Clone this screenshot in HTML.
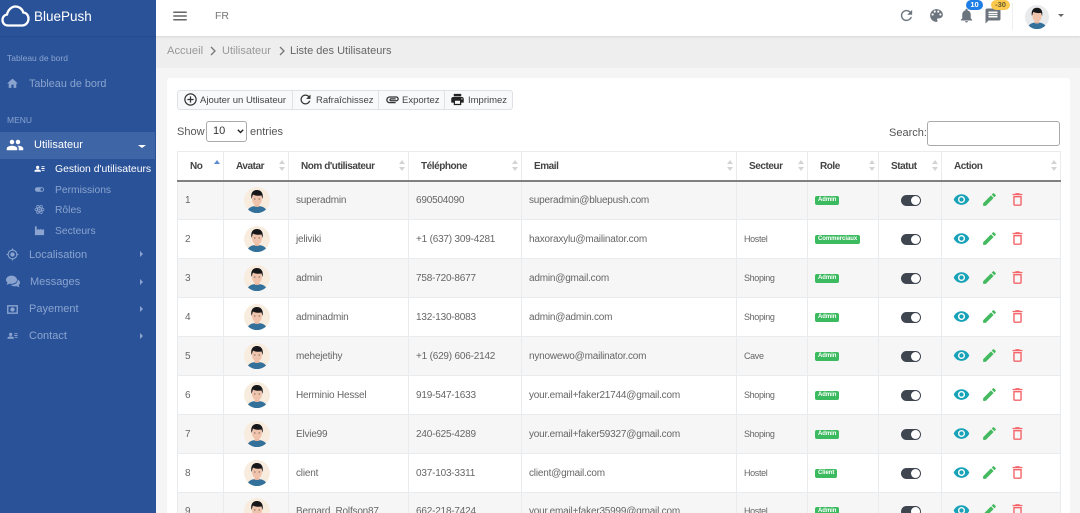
<!DOCTYPE html>
<html><head><meta charset="utf-8"><title>BluePush</title>
<style>
*{box-sizing:border-box}
html,body{margin:0;padding:0;width:1080px;height:513px;overflow:hidden;background:#f5f5f5;font-family:"Liberation Sans",sans-serif;color:#555}
#root{position:absolute;left:0;top:0;width:1080px;height:513px;overflow:hidden}
.a{position:absolute;white-space:nowrap}
svg{display:block;fill:currentColor}
#side{position:absolute;left:0;top:0;width:156px;height:513px;background:#2a5298;color:#8aa4cf;overflow:hidden}
#top{position:absolute;left:156px;top:0;width:924px;height:36px;background:#fff;box-shadow:0 1px 2px rgba(0,0,0,.1)}
#crumb{position:absolute;left:156px;top:36px;width:924px;height:32px;background:#eee}
#card{position:absolute;left:167px;top:78px;width:903px;height:440px;background:#fff;border-radius:3px}
table{position:absolute;left:177px;top:151px;width:883px;border-collapse:collapse;table-layout:fixed;font-size:10px;letter-spacing:-.2px}
th{height:29px;border:1px solid #e9ecef;border-bottom:2px solid #808080;color:#444;text-align:left;padding:2px 0 0 12px;font-size:10px;letter-spacing:-.45px;position:relative}
td{height:39px;border:1px solid #e9ecef;padding:0 0 0 7px;color:#666;white-space:nowrap;overflow:hidden}
td.s{font-size:9px;letter-spacing:-.35px}
tr:nth-child(odd) td{background:#f6f6f6}
tr.l td{padding-bottom:2px}
th i{position:absolute;right:3px;top:8px;width:6px;height:11px}
th i:before,th i:after{content:"";position:absolute;left:0;border-left:3px solid transparent;border-right:3px solid transparent}
th i:before{top:0;border-bottom:4px solid #d4d4d4}
th i:after{bottom:0;border-top:4px solid #d4d4d4}
.bd{display:inline-block;background:#3cba5f;color:#fff;font-size:6px;font-weight:bold;line-height:9px;padding:0 3px;border-radius:2px;position:relative;top:-1px;letter-spacing:-.05px}
.tg{display:block;width:20px;height:11px;border-radius:6px;background:#3f4650;position:relative;margin-left:15px}
.tg:after{content:"";position:absolute;right:1px;top:1px;width:9px;height:9px;border-radius:50%;background:#fff}
.ac{margin-left:4px;position:relative;top:-1px}
.av{margin-left:13px;position:relative;top:-.5px}
.btn{position:absolute;top:90px;height:20px;background:#f8f9fa;border:1px solid #dee2e6;color:#444;font-size:9.500px;line-height:20px;white-space:nowrap}
</style></head><body><div id="root">
<svg width="0" height="0" style="position:absolute">
<symbol id="ava" viewBox="0 0 26 26"><circle cx="13" cy="13" r="13" fill="#f8ecdf"/><path d="M4 22.500c2-3 5.500-3.500 9-3.500s7 .5 9 3.500a13 13 0 0 1-18 0z" fill="#33709a"/><rect x="10.800" y="15" width="4.400" height="5" fill="#e5b49c"/><ellipse cx="13" cy="12" rx="5" ry="6.500" fill="#f0c4ac"/><path d="M7.500 12c-1.200-6 1.500-9 5.500-9s6.700 3 5.500 9l-1-3.500c-2.500.5-6.500.3-8.500-1z" fill="#17171a"/><circle cx="10.800" cy="12" r=".6" fill="#555"/><circle cx="15.200" cy="12" r=".6" fill="#555"/></symbol>
<symbol id="acts" viewBox="0 0 73 17">
<svg x="0" y="0" width="17" height="17" viewBox="0 0 24 24" style="color:#17a2b8"><path d="M12 4.500C7 4.500 2.730 7.610 1 12c1.730 4.390 6 7.500 11 7.500s9.270-3.110 11-7.500c-1.730-4.390-6-7.500-11-7.500zM12 17c-2.760 0-5-2.240-5-5s2.240-5 5-5 5 2.240 5 5-2.240 5-5 5zm0-8c-1.660 0-3 1.340-3 3s1.340 3 3 3 3-1.340 3-3-1.340-3-3-3z"/></svg>
<svg x="28" y="0" width="17" height="17" viewBox="0 0 24 24" style="color:#45b95f"><path d="M3 17.250V21h3.750L17.810 9.940l-3.750-3.750L3 17.250zM20.710 7.040c.39-.39.39-1.020 0-1.410l-2.340-2.340c-.39-.39-1.020-.39-1.410 0l-1.830 1.830 3.750 3.750 1.830-1.830z"/></svg>
<svg x="56" y="0" width="17" height="17" viewBox="0 0 24 24" style="color:#f4666b"><path d="M6 19c0 1.100.9 2 2 2h8c1.100 0 2-.9 2-2V7H6v12zM8 9h8v10H8V9zm7.500-5l-1-1h-5l-1 1H5v2h14V4z"/></svg>
</symbol>
<symbol id="ppl" viewBox="0 0 24 24"><path d="M16 11c1.660 0 2.990-1.340 2.990-3S17.660 5 16 5c-1.660 0-3 1.340-3 3s1.340 3 3 3zm-8 0c1.660 0 2.990-1.340 2.990-3S9.660 5 8 5C6.340 5 5 6.340 5 8s1.340 3 3 3zm0 2c-2.330 0-7 1.170-7 3.500V19h14v-2.500c0-2.330-4.670-3.500-7-3.500zm8 0c-.29 0-.62.02-.97.05 1.160.84 1.970 1.970 1.970 3.450V19h6v-2.500c0-2.330-4.670-3.500-7-3.500z"/></symbol>
<symbol id="ct" viewBox="0 0 24 24"><path d="M8 6a3.500 3.500 0 1 1 0 7 3.500 3.500 0 0 1 0-7zM1 19v-1.500C1 15 5.500 14 8 14s7 1 7 3.500V19zM16 7h7v2h-7zM16 11h7v2h-7zM17 15h6v2h-6z"/></symbol>
</svg>

<div id="crumb"></div>
<div id="top"></div>
<div id="card"></div>

<div id="side">
<div class="a" style="left:0;top:0;width:156px;height:36px;box-shadow:0 1px 1px rgba(0,0,0,.08)"></div>
<svg class="a" style="left:1px;top:5px;color:#fff" width="29" height="22" viewBox="0 0 29 22"><path d="M7 20.500C3.500 20.500 1.500 18 1.500 15c0-3 2-5 4.500-5.500C7 5 10.500 1.500 14.500 1.500c3.800 0 6.800 2.500 7.800 6 3 .2 5.200 2.800 5.200 6 0 3.800-2.700 7-6.500 7z" fill="none" stroke="#fff" stroke-width="2.300"/></svg>
<div class="a" style="left:34px;top:8px;font-size:13.500px;line-height:17px;color:#fff">BluePush</div>
<div class="a" style="left:7px;top:53px;font-size:8.500px;line-height:11px">Tableau de bord</div>
<svg class="a" style="left:6px;top:77px" width="13" height="13" viewBox="0 0 24 24"><path d="M10 20v-6h4v6h5v-8h3L12 3 2 12h3v8z"/></svg>
<div class="a" style="left:29px;top:78px;font-size:10.800px;line-height:13px">Tableau de bord</div>
<div class="a" style="left:7px;top:115px;font-size:8.500px;line-height:11px">MENU</div>
<div class="a" style="left:0;top:132px;width:155px;height:27px;background:#3e65a6"></div>
<svg class="a" style="left:6px;top:136px;color:#fff" width="18" height="18" viewBox="0 0 24 24"><use href="#ppl"/></svg>
<div class="a" style="left:34px;top:139px;font-size:11px;line-height:13px;color:#fff">Utilisateur</div>
<div class="a" style="left:138px;top:145px;border:4px solid transparent;border-top:3px solid #fff;border-bottom:0"></div>
<svg class="a" style="left:34px;top:163px;color:#fff" width="11" height="11" viewBox="0 0 24 24"><use href="#ct"/></svg>
<div class="a" style="left:55px;top:164px;font-size:10.400px;line-height:12px;color:#fff">Gestion d'utilisateurs</div>
<svg class="a" style="left:34px;top:184px" width="11" height="11" viewBox="0 0 24 24"><path d="M17 7H7a5 5 0 0 0 0 10h10a5 5 0 0 0 0-10zm0 8a3 3 0 1 1 0-6 3 3 0 0 1 0 6z"/></svg>
<div class="a" style="left:55px;top:185px;font-size:10.300px;line-height:12px">Permissions</div>
<svg class="a" style="left:34px;top:204px" width="11" height="11" viewBox="0 0 24 24"><g fill="none" stroke="currentColor" stroke-width="1.800"><ellipse cx="12" cy="12" rx="10" ry="4"/><ellipse cx="12" cy="12" rx="10" ry="4" transform="rotate(60 12 12)"/><ellipse cx="12" cy="12" rx="10" ry="4" transform="rotate(120 12 12)"/></g><circle cx="12" cy="12" r="2"/></svg>
<div class="a" style="left:55px;top:205px;font-size:10.300px;line-height:12px">Rôles</div>
<svg class="a" style="left:34px;top:225px" width="11" height="11" viewBox="0 0 24 24"><path d="M2 3h4v8l5-3v3l5-3v3l6-2v13H2z"/></svg>
<div class="a" style="left:55px;top:226px;font-size:10.300px;line-height:12px">Secteurs</div>
<svg class="a" style="left:6px;top:248px" width="13" height="13" viewBox="0 0 24 24"><path d="M12 8c-2.210 0-4 1.790-4 4s1.790 4 4 4 4-1.790 4-4-1.790-4-4-4zm8.940 3c-.46-4.170-3.770-7.480-7.940-7.940V1h-2v2.060C6.830 3.520 3.520 6.830 3.060 11H1v2h2.060c.46 4.170 3.770 7.480 7.940 7.940V23h2v-2.060c4.170-.46 7.480-3.770 7.940-7.940H23v-2h-2.060zM12 19c-3.870 0-7-3.130-7-7s3.130-7 7-7 7 3.130 7 7-3.130 7-7 7z"/></svg>
<div class="a" style="left:29px;top:249px;font-size:11px;line-height:13px">Localisation</div>
<svg class="a" style="left:6px;top:275px" width="14" height="13" viewBox="0 0 24 22"><ellipse cx="9.500" cy="8" rx="9.500" ry="7"/><path d="M3 12l-2 5 6-2.500z"/><path d="M20 7.500c2.500 1.300 4 3.300 4 5.500 0 1.700-.9 3.200-2.300 4.400L23 21l-5-2c-1 .2-2 .3-3 .3-3 0-5.700-1-7.200-2.700 6.500.6 12.700-2.800 12.200-9.100z"/></svg>
<div class="a" style="left:30px;top:276px;font-size:11px;line-height:13px">Messages</div>
<svg class="a" style="left:6px;top:303px" width="13" height="13" viewBox="0 0 24 24"><path d="M2 4h20v16H2zm2.500 2.500v11h15v-11zM12 8a4 4 0 1 1 0 8 4 4 0 0 1 0-8z"/></svg>
<div class="a" style="left:29px;top:303px;font-size:11px;line-height:13px">Payement</div>
<svg class="a" style="left:7px;top:330px" width="11" height="11" viewBox="0 0 24 24"><use href="#ct"/></svg>
<div class="a" style="left:29px;top:330px;font-size:11px;line-height:13px">Contact</div>
<div class="a" style="left:140px;top:251px;border:3.500px solid transparent;border-left:3px solid #8aa4cf;border-right:0"></div>
<div class="a" style="left:140px;top:279px;border:3.500px solid transparent;border-left:3px solid #8aa4cf;border-right:0"></div>
<div class="a" style="left:140px;top:306px;border:3.500px solid transparent;border-left:3px solid #8aa4cf;border-right:0"></div>
<div class="a" style="left:140px;top:333px;border:3.500px solid transparent;border-left:3px solid #8aa4cf;border-right:0"></div>
</div>

<svg class="a" style="left:171px;top:7px;color:#666" width="18" height="18" viewBox="0 0 24 24"><path d="M3 18h18v-2H3v2zm0-5h18v-2H3v2zm0-7v2h18V6H3z"/></svg>
<div class="a" style="left:215px;top:9px;font-size:10.500px;line-height:14px;color:#777">FR</div>
<svg class="a" style="left:898px;top:7px;color:#6c757d" width="17" height="17" viewBox="0 0 24 24"><path d="M17.650 6.350C16.200 4.900 14.210 4 12 4c-4.420 0-7.990 3.580-7.990 8s3.570 8 7.990 8c3.730 0 6.840-2.550 7.730-6h-2.080c-.82 2.330-3.040 4-5.650 4-3.310 0-6-2.690-6-6s2.690-6 6-6c1.660 0 3.140.69 4.220 1.780L13 11h7V4l-2.350 2.350z"/></svg>
<svg class="a" style="left:928px;top:7px;color:#6c757d" width="17" height="17" viewBox="0 0 24 24"><path d="M12 3c-4.970 0-9 4.030-9 9s4.030 9 9 9c.83 0 1.500-.67 1.500-1.500 0-.39-.15-.74-.39-1.010-.23-.26-.38-.61-.38-.99 0-.83.67-1.500 1.500-1.500H16c2.760 0 5-2.240 5-5 0-4.420-4.030-8-9-8zm-5.500 9c-.83 0-1.500-.67-1.500-1.500S5.670 9 6.500 9 8 9.670 8 10.500 7.330 12 6.500 12zm3-4C8.670 8 8 7.330 8 6.500S8.670 5 9.500 5s1.500.67 1.500 1.500S10.330 8 9.500 8zm5 0c-.83 0-1.500-.67-1.500-1.500S13.670 5 14.500 5s1.500.67 1.500 1.500S15.330 8 14.500 8zm3 4c-.83 0-1.500-.67-1.500-1.500S16.670 9 17.500 9s1.500.67 1.500 1.500-.67 1.500-1.500 1.500z"/></svg>
<svg class="a" style="left:958px;top:7px;color:#6c757d" width="17" height="17" viewBox="0 0 24 24"><path d="M12 22c1.100 0 2-.9 2-2h-4c0 1.100.9 2 2 2zm6-6v-5c0-3.070-1.630-5.640-4.500-6.320V4c0-.83-.67-1.500-1.500-1.500s-1.500.67-1.500 1.500v.68C7.640 5.360 6 7.920 6 11v5l-2 2v1h16v-1l-2-2z"/></svg>
<svg class="a" style="left:984px;top:7px;color:#6c757d" width="18" height="18" viewBox="0 0 24 24"><path d="M20 2H4c-1.100 0-1.990.9-1.990 2L2 22l4-4h14c1.100 0 2-.9 2-2V4c0-1.100-.9-2-2-2zm-2 12H6v-2h12v2zm0-3H6V9h12v2zm0-3H6V6h12v2z"/></svg>
<div class="a" style="left:966px;top:0;width:17px;height:10px;background:#1e7ee6;color:#fff;border-radius:5px;font-size:7.500px;font-weight:bold;line-height:10px;text-align:center">10</div>
<div class="a" style="left:991px;top:0;width:19px;height:10px;background:#fcc94f;color:#6b5a2b;border-radius:5px;font-size:7.500px;font-weight:bold;line-height:10px;text-align:center">-30</div>
<div class="a" style="left:1012px;top:3px;width:1px;height:27px;background:#eee"></div>
<svg class="a" style="left:1025px;top:5px" width="24" height="24" viewBox="0 0 26 26"><circle cx="13" cy="13" r="13" fill="#e9eaec"/><path d="M4 22.500c2-3 5.500-3.500 9-3.500s7 .5 9 3.500a13 13 0 0 1-18 0z" fill="#33709a"/><rect x="10.800" y="15" width="4.400" height="5" fill="#e5b49c"/><ellipse cx="13" cy="12" rx="5" ry="6.500" fill="#f0c4ac"/><path d="M7.500 12c-1.200-6 1.500-9 5.500-9s6.700 3 5.500 9l-1-3.500c-2.500.5-6.500.3-8.500-1z" fill="#17171a"/></svg>
<div class="a" style="left:1058px;top:14px;border:3.500px solid transparent;border-top:3.500px solid #666;border-bottom:0"></div>

<div class="a" style="left:167px;top:44px;font-size:11.200px;line-height:14px;color:#999">Accueil</div>
<svg class="a" style="left:210px;top:46px;color:#777" width="6" height="10" viewBox="0 0 6 10"><path d="M1 1l4 4-4 4" fill="none" stroke="currentColor" stroke-width="1.300"/></svg>
<div class="a" style="left:222px;top:44px;font-size:11px;line-height:14px;color:#999">Utilisateur</div>
<svg class="a" style="left:279px;top:46px;color:#777" width="6" height="10" viewBox="0 0 6 10"><path d="M1 1l4 4-4 4" fill="none" stroke="currentColor" stroke-width="1.300"/></svg>
<div class="a" style="left:290px;top:44px;font-size:11px;line-height:14px;color:#666">Liste des Utilisateurs</div>

<div class="btn" style="left:177px;width:116px;border-radius:3px 0 0 3px;padding-left:22px">Ajouter un Utlisateur</div>
<svg class="a" style="left:183px;top:92px;color:#333" width="15" height="15" viewBox="0 0 24 24"><path d="M13 7h-2v4H7v2h4v4h2v-4h4v-2h-4V7zm-1-5C6.480 2 2 6.480 2 12s4.480 10 10 10 10-4.480 10-10S17.520 2 12 2zm0 18c-4.410 0-8-3.590-8-8s3.590-8 8-8 8 3.590 8 8-3.590 8-8 8z"/></svg>
<div class="btn" style="left:292px;width:87px;padding-left:23px">Rafraîchissez</div>
<svg class="a" style="left:298px;top:92px;color:#333" width="15" height="15" viewBox="0 0 24 24"><path d="M17.650 6.350C16.200 4.900 14.210 4 12 4c-4.420 0-7.990 3.580-7.990 8s3.570 8 7.990 8c3.730 0 6.840-2.550 7.730-6h-2.080c-.82 2.330-3.040 4-5.650 4-3.310 0-6-2.690-6-6s2.690-6 6-6c1.660 0 3.140.69 4.220 1.780L13 11h7V4l-2.350 2.350z"/></svg>
<div class="btn" style="left:378px;width:67px;padding-left:23px">Exportez</div>
<svg class="a" style="left:385px;top:92px;color:#333" width="15" height="15" viewBox="0 0 24 24"><path d="M2 12.500C2 9.460 4.460 7 7.500 7H18c2.210 0 4 1.790 4 4s-1.790 4-4 4H9.500C8.120 15 7 13.880 7 12.500S8.120 10 9.500 10H17v2H9.410c-.55 0-.55 1 0 1H18c1.100 0 2-.9 2-2s-.9-2-2-2H7.500C5.570 9 4 10.570 4 12.500S5.570 16 7.500 16H17v2H7.500C4.460 18 2 15.540 2 12.500z"/></svg>
<div class="btn" style="left:444px;width:69px;border-radius:0 3px 3px 0;padding-left:23px">Imprimez</div>
<svg class="a" style="left:450px;top:92px;color:#222" width="15" height="15" viewBox="0 0 24 24"><path d="M19 8H5c-1.660 0-3 1.340-3 3v6h4v4h12v-4h4v-6c0-1.660-1.340-3-3-3zm-3 11H8v-5h8v5zm3-7c-.55 0-1-.45-1-1s.45-1 1-1 1 .45 1 1-.45 1-1 1zm-1-9H6v4h12V3z"/></svg>

<div class="a" style="left:177px;top:125px;font-size:11px;line-height:14px;color:#555">Show</div>
<div class="a" style="left:206px;top:121px;width:41px;height:21px;border:1px solid #aaa;border-radius:3px;background:#fff;font-size:11px;line-height:19px;padding-left:6px;color:#333">10</div>
<svg class="a" style="left:237px;top:129px;color:#222" width="7" height="5" viewBox="0 0 7 5"><path d="M.8.800l2.700 2.700L6.200.800" fill="none" stroke="currentColor" stroke-width="1.400"/></svg>
<div class="a" style="left:250px;top:125px;font-size:11px;line-height:14px;color:#555">entries</div>
<div class="a" style="left:889px;top:126px;font-size:11px;line-height:14px;color:#555">Search:</div>
<div class="a" style="left:927px;top:121px;width:133px;height:25px;border:1px solid #aaa;border-radius:3px;background:#fff"></div>

<table>
<colgroup><col style="width:46px"><col style="width:65px"><col style="width:120px"><col style="width:113px"><col style="width:215px"><col style="width:71px"><col style="width:71px"><col style="width:63px"><col style="width:119px"></colgroup>
<thead><tr><th>No</th><th>Avatar<i></i></th><th>Nom d'utilisateur<i></i></th><th>Téléphone<i></i></th><th>Email<i></i></th><th>Secteur<i></i></th><th>Role<i></i></th><th>Statut<i></i></th><th>Action<i></i></th></tr></thead>
<tbody>
<tr><td>1</td><td><svg class="av" width="26" height="26"><use href="#ava"/></svg></td><td>superadmin</td><td>690504090</td><td>superadmin@bluepush.com</td><td class="s"></td><td><span class="bd">Admin</span></td><td><span class="tg"></span></td><td><svg class="ac" width="73" height="17"><use href="#acts"/></svg></td></tr>
<tr><td>2</td><td><svg class="av" width="26" height="26"><use href="#ava"/></svg></td><td>jeliviki</td><td>+1 (637) 309-4281</td><td>haxoraxylu@mailinator.com</td><td class="s">Hostel</td><td><span class="bd">Commerciaux</span></td><td><span class="tg"></span></td><td><svg class="ac" width="73" height="17"><use href="#acts"/></svg></td></tr>
<tr><td>3</td><td><svg class="av" width="26" height="26"><use href="#ava"/></svg></td><td>admin</td><td>758-720-8677</td><td>admin@gmail.com</td><td class="s">Shoping</td><td><span class="bd">Admin</span></td><td><span class="tg"></span></td><td><svg class="ac" width="73" height="17"><use href="#acts"/></svg></td></tr>
<tr><td>4</td><td><svg class="av" width="26" height="26"><use href="#ava"/></svg></td><td>adminadmin</td><td>132-130-8083</td><td>admin@admin.com</td><td class="s">Shoping</td><td><span class="bd">Admin</span></td><td><span class="tg"></span></td><td><svg class="ac" width="73" height="17"><use href="#acts"/></svg></td></tr>
<tr><td>5</td><td><svg class="av" width="26" height="26"><use href="#ava"/></svg></td><td>mehejetihy</td><td>+1 (629) 606-2142</td><td>nynowewo@mailinator.com</td><td class="s">Cave</td><td><span class="bd">Admin</span></td><td><span class="tg"></span></td><td><svg class="ac" width="73" height="17"><use href="#acts"/></svg></td></tr>
<tr><td>6</td><td><svg class="av" width="26" height="26"><use href="#ava"/></svg></td><td>Herminio Hessel</td><td>919-547-1633</td><td>your.email+faker21744@gmail.com</td><td class="s">Shoping</td><td><span class="bd">Admin</span></td><td><span class="tg"></span></td><td><svg class="ac" width="73" height="17"><use href="#acts"/></svg></td></tr>
<tr><td>7</td><td><svg class="av" width="26" height="26"><use href="#ava"/></svg></td><td>Elvie99</td><td>240-625-4289</td><td>your.email+faker59327@gmail.com</td><td class="s">Shoping</td><td><span class="bd">Admin</span></td><td><span class="tg"></span></td><td><svg class="ac" width="73" height="17"><use href="#acts"/></svg></td></tr>
<tr><td>8</td><td><svg class="av" width="26" height="26"><use href="#ava"/></svg></td><td>client</td><td>037-103-3311</td><td>client@gmail.com</td><td class="s">Hostel</td><td><span class="bd">Client</span></td><td><span class="tg"></span></td><td><svg class="ac" width="73" height="17"><use href="#acts"/></svg></td></tr>
<tr class="l"><td>9</td><td><svg class="av" width="26" height="26"><use href="#ava"/></svg></td><td>Bernard_Rolfson87</td><td>662-218-7424</td><td>your.email+faker35999@gmail.com</td><td class="s">Hostel</td><td><span class="bd">Admin</span></td><td><span class="tg"></span></td><td><svg class="ac" width="73" height="17"><use href="#acts"/></svg></td></tr>
</tbody></table>
<div class="a" style="left:214px;top:160px;border-left:3px solid transparent;border-right:3px solid transparent;border-bottom:4px solid #5b8bd0"></div>
</div></body></html>
